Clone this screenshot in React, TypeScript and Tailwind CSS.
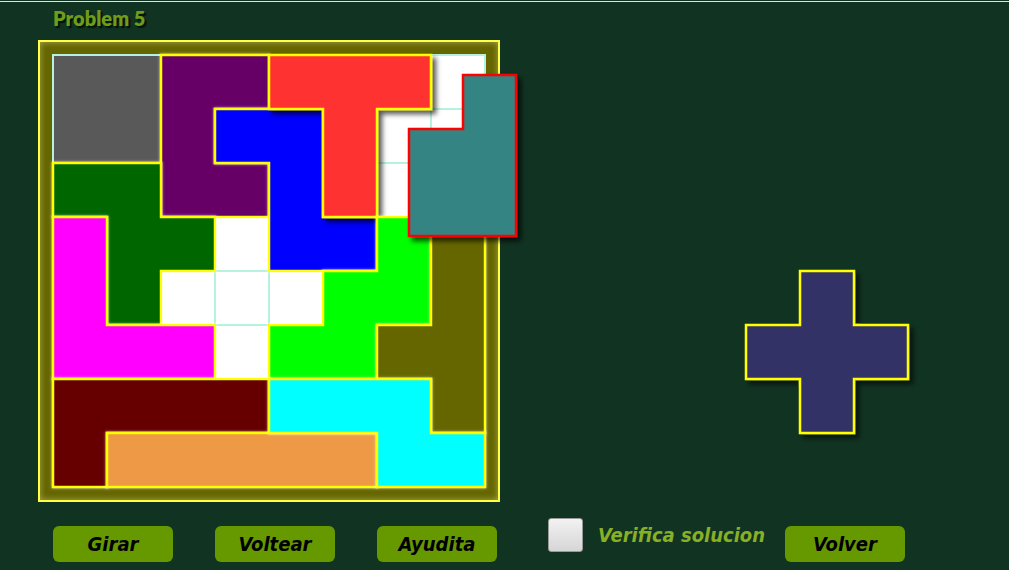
import React from 'react';

type Pt = [number, number];

// grid coords -> svg coords (cell lines sit at 1 + 54k)
const pts = (list: Pt[]) => list.map(([c, r]) => `${1 + 54 * c},${1 + 54 * r}`).join(' ');

const PIECES: { fill: string; shape: Pt[]; drop?: boolean }[] = [
  { fill: '#660066', shape: [[2, 0], [4, 0], [4, 1], [3, 1], [3, 2], [4, 2], [4, 3], [2, 3]] },
  { fill: '#0000ff', shape: [[3, 1], [5, 1], [5, 3], [6, 3], [6, 4], [4, 4], [4, 2], [3, 2]] },
  { fill: '#ff3333', shape: [[4, 0], [7, 0], [7, 1], [6, 1], [6, 3], [5, 3], [5, 1], [4, 1]], drop: true },
  { fill: '#006600', shape: [[0, 2], [2, 2], [2, 3], [3, 3], [3, 4], [2, 4], [2, 5], [1, 5], [1, 3], [0, 3]] },
  { fill: '#ff00ff', shape: [[0, 3], [1, 3], [1, 5], [3, 5], [3, 6], [0, 6]] },
  { fill: '#00ff00', shape: [[6, 3], [7, 3], [7, 5], [6, 5], [6, 6], [4, 6], [4, 5], [5, 5], [5, 4], [6, 4]] },
  { fill: '#666600', shape: [[7, 3], [8, 3], [8, 7], [7, 7], [7, 6], [6, 6], [6, 5], [7, 5]] },
  { fill: '#660000', shape: [[0, 6], [4, 6], [4, 7], [1, 7], [1, 8], [0, 8]] },
  { fill: '#ee9944', shape: [[1, 7], [6, 7], [6, 8], [1, 8]] },
  { fill: '#00ffff', shape: [[4, 6], [7, 6], [7, 7], [8, 7], [8, 8], [6, 8], [6, 7], [4, 7]] },
];

const LINES = [0, 1, 2, 3, 4, 5, 6, 7, 8].map(k => 1 + 54 * k);

function Board() {
  return (
    <svg width="434" height="434" viewBox="0 0 434 434" className="block overflow-visible">
      <defs>
        <filter id="glow" x="-10%" y="-10%" width="120%" height="120%">
          <feDropShadow dx="0" dy="0" stdDeviation="1.6" floodColor="#ffffff" floodOpacity="0.55" />
        </filter>
        <filter id="drop" x="-20%" y="-20%" width="150%" height="150%">
          <feDropShadow dx="4" dy="4" stdDeviation="2.5" floodColor="#000000" floodOpacity="0.65" />
        </filter>
      </defs>
      <rect x="0" y="0" width="434" height="434" fill="#ffffff" />
      {LINES.map(v => (
        <g key={v}>
          <line x1={v} y1="0" x2={v} y2="434" stroke="#b5f3e0" strokeWidth="2" />
          <line x1="0" y1={v} x2="434" y2={v} stroke="#b5f3e0" strokeWidth="2" />
        </g>
      ))}
      <rect x="2" y="2" width="108" height="108" fill="#595959" />
      {PIECES.map((p, i) => (
        <polygon
          key={i}
          points={pts(p.shape)}
          fill={p.fill}
          stroke="#ffff00"
          strokeWidth="2.5"
          filter={p.drop ? 'url(#drop)' : 'url(#glow)'}
        />
      ))}
      {/* piece being dragged */}
      <polygon
        points="411,21 464,21 464,182 357,182 357,75 411,75"
        fill="#358484"
        stroke="#ff0000"
        strokeWidth="2.5"
        filter="url(#drop)"
      />
    </svg>
  );
}

function Cross() {
  return (
    <svg width="166" height="166" viewBox="0 0 166 166" className="block overflow-visible">
      <defs>
        <filter id="xdrop" x="-20%" y="-20%" width="150%" height="150%">
          <feDropShadow dx="4" dy="4" stdDeviation="2.5" floodColor="#000000" floodOpacity="0.6" />
        </filter>
      </defs>
      <polygon
        points="55,1 109,1 109,55 163,55 163,109 109,109 109,163 55,163 55,109 1,109 1,55 55,55"
        fill="#333366"
        stroke="#ffff00"
        strokeWidth="2.5"
        filter="url(#xdrop)"
      />
    </svg>
  );
}

const btn =
  "w-[120px] h-[36px] rounded-md bg-[#669900] flex items-center justify-center text-black font-bold italic text-[20px] font-['DejaVu_Sans_Condensed','DejaVu_Sans',sans-serif]";

export default function App() {
  return (
    <div className="w-[1009px] h-[570px] bg-[#113322] overflow-hidden">
      <div className="h-px mt-px bg-[#cdeee4]" />

      <div className="h-[38px] pl-[53px] flex items-center">
        <span className="text-[20px] font-extrabold text-[#6f9c1a] font-['Lato',sans-serif] [text-shadow:2px_2px_1px_#04140a] leading-none -mt-[7px]">
          Problem 5
        </span>
      </div>

      <div className="flex">
        <div className="ml-[38px] w-[462px] h-[462px] border-2 border-[#ffff44] bg-[#666600] p-[12px] shadow-[inset_0_0_6px_rgba(255,255,200,0.45)]">
          <Board />
        </div>
        <div className="ml-[245px] mt-[230px]">
          <Cross />
        </div>
      </div>

      <div className="flex items-start">
        <button className={`${btn} ml-[53px] mt-[24px]`}>Girar</button>
        <button className={`${btn} ml-[42px] mt-[24px]`}>Voltear</button>
        <button className={`${btn} ml-[42px] mt-[24px]`}>Ayudita</button>
        <div className="ml-[51px] mt-[16px] w-[35px] h-[34px] rounded-[3px] border border-[#9a9a9a] bg-gradient-to-b from-[#f2f2f2] to-[#d6d6d6]" />
        <div className="ml-[15px] mt-[18px] w-[187px] h-[30px] flex items-center">
          <span className="font-bold italic text-[20px] text-[#88b025] font-['DejaVu_Sans_Condensed','DejaVu_Sans',sans-serif]">
            Verifica solucion
          </span>
        </div>
        <button className={`${btn} mt-[24px]`}>Volver</button>
      </div>
    </div>
  );
}
